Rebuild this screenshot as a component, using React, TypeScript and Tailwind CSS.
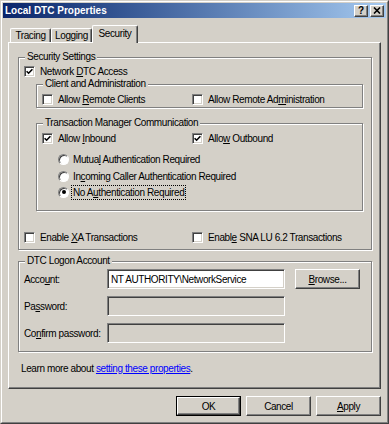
import type { ReactNode } from 'react';

const raised =
  'border border-white border-r-[#404040] border-b-[#404040] shadow-[inset_-1px_-1px_0_#808080,inset_1px_1px_0_#d4d0c8]';
const sunken =
  'border border-[#808080] border-r-white border-b-white shadow-[inset_1px_1px_0_#404040,inset_-1px_-1px_0_#d4d0c8]';

function U({ children }: { children: ReactNode }) {
  return <span className="underline underline-offset-[1px]">{children}</span>;
}

function Check({ checked }: { checked?: boolean }) {
  return (
    <span className={`w-[11px] h-[11px] shrink-0 bg-white flex items-center justify-center ${sunken}`}>
      {checked && (
        <svg width="7" height="7" viewBox="0 0 7 7">
          <path d="M0.6 3.2 L2.6 5.2 L6.4 1.2" fill="none" stroke="#000" strokeWidth="1.6" />
        </svg>
      )}
    </span>
  );
}

function Radio({ on }: { on?: boolean }) {
  return (
    <span className="w-[11px] h-[11px] shrink-0 rounded-full bg-white border border-[#808080] border-r-white border-b-white shadow-[inset_1px_1px_0_#404040] flex items-center justify-center">
      {on && <span className="w-[4px] h-[4px] rounded-full bg-black" />}
    </span>
  );
}

function Group({ title, className = '', children }: { title: string; className?: string; children: ReactNode }) {
  return (
    <fieldset className={`border border-[#808080] shadow-[inset_1px_1px_0_#fff,1px_1px_0_#fff] ${className}`}>
      <legend className="ml-[6px] px-[2px] leading-[12px] bg-[#d4d0c8]">{title}</legend>
      {children}
    </fieldset>
  );
}

function Btn({ children, isDefault }: { children: ReactNode; isDefault?: boolean }) {
  return (
    <div className={`w-[65px] h-[20px] ${isDefault ? 'border border-black' : ''}`}>
      <div className={`h-full flex items-center justify-center ${raised}`}>{children}</div>
    </div>
  );
}

export default function App() {
  return (
    <div className="w-[389px] h-[424px] bg-[#d4d0c8] text-black text-[10px] tracking-[-0.4px] font-['Liberation_Sans',Arial,sans-serif] border border-[#d4d0c8] border-r-[#404040] border-b-[#404040]">
      <div className="h-full flex flex-col border border-white border-r-[#808080] border-b-[#808080] p-px">
        {/* title bar */}
        <div className="h-[15px] flex items-center bg-linear-to-r from-[#0a246a] to-[#a6caf0] pl-[2px] pr-[2px]">
          <span className="text-white font-bold tracking-normal">Local DTC Properties</span>
          <div className="ml-auto flex gap-[2px]">
            <div className={`w-[14px] h-[12px] bg-[#d4d0c8] flex items-center justify-center font-bold text-[10px] tracking-normal leading-none ${raised}`}>
              ?
            </div>
            <div className={`w-[14px] h-[12px] bg-[#d4d0c8] flex items-center justify-center ${raised}`}>
              <svg width="8" height="7" viewBox="0 0 8 7">
                <path d="M1 0.5 L7 6.5 M7 0.5 L1 6.5" stroke="#000" strokeWidth="1.6" />
              </svg>
            </div>
          </div>
        </div>

        {/* tabs */}
        <div className="flex items-end h-[17px] mt-[7px] pl-[7px]">
          <div className="w-[41px] h-[14px] flex items-center justify-center border-t border-l border-white border-r border-r-[#404040] rounded-tl-[2px] rounded-tr-[2px] shadow-[inset_-1px_0_0_#808080]">
            Tracing
          </div>
          <div className="w-[41px] h-[14px] flex items-center justify-center border-t border-l border-white border-r border-r-[#404040] rounded-tl-[2px] rounded-tr-[2px] shadow-[inset_-1px_0_0_#808080]">
            Logging
          </div>
          <div className="relative z-10 -mb-px w-[46px] h-[18px] pb-[3px] bg-[#d4d0c8] flex items-center justify-center border-t border-l border-white border-r border-r-[#404040] rounded-tl-[2px] rounded-tr-[2px] shadow-[inset_-1px_0_0_#808080]">
            Security
          </div>
        </div>

        {/* tab panel */}
        <div className="mx-[5px] h-[347px] border border-white border-r-[#404040] border-b-[#404040] shadow-[inset_-1px_-1px_0_#808080] pt-[8px] pl-[9px] pr-[8px]">
          <Group title="Security Settings">
            <div className="pl-[5px] pr-[8px] pb-[5px]">
              <div className="h-[14px] mt-[1px] flex items-center">
                <Check checked />
                <span className="ml-[5px]">
                  Network <U>D</U>TC Access
                </span>
              </div>

              <div className="pl-[12px]">
                <Group title="Client and Administration">
                  <div className="pt-[2px] pb-[1px] pl-[5px] flex items-center h-[14px] box-content">
                    <div className="w-[150px] flex items-center">
                      <Check />
                      <span className="ml-[5px]">
                        Allow <U>R</U>emote Clients
                      </span>
                    </div>
                    <div className="flex items-center">
                      <Check />
                      <span className="ml-[5px]">
                        Allow Remote Ad<U>m</U>inistration
                      </span>
                    </div>
                  </div>
                </Group>

                <Group title="Transaction Manager Communication" className="mt-[9px]">
                  <div className="pt-[2px] pb-[10px] pl-[5px]">
                    <div className="flex items-center h-[14px]">
                      <div className="w-[150px] flex items-center">
                        <Check checked />
                        <span className="ml-[5px]">
                          Allow <U>I</U>nbound
                        </span>
                      </div>
                      <div className="flex items-center">
                        <Check checked />
                        <span className="ml-[5px]">
                          Allo<U>w</U> Outbound
                        </span>
                      </div>
                    </div>
                    <div className="pl-[16px] mt-[6px]">
                      <div className="flex items-center h-[16px]">
                        <Radio />
                        <span className="ml-[2px] border border-transparent px-px leading-[13px]">
                          Mutua<U>l</U> Authentication Required
                        </span>
                      </div>
                      <div className="flex items-center h-[16px] mt-px">
                        <Radio />
                        <span className="ml-[2px] border border-transparent px-px leading-[13px]">
                          In<U>c</U>oming Caller Authentication Required
                        </span>
                      </div>
                      <div className="flex items-center h-[16px]">
                        <Radio on />
                        <span className="ml-[2px] border border-dotted border-black px-px leading-[13px]">
                          No A<U>u</U>thentication Required
                        </span>
                      </div>
                    </div>
                  </div>
                </Group>
              </div>

              <div className="flex items-center h-[14px] mt-[19px]">
                <div className="w-[168px] flex items-center">
                  <Check />
                  <span className="ml-[5px]">
                    Enable <U>X</U>A Transactions
                  </span>
                </div>
                <div className="flex items-center">
                  <Check />
                  <span className="ml-[5px]">
                    Enabl<U>e</U> SNA LU 6.2 Transactions
                  </span>
                </div>
              </div>
            </div>
          </Group>

          <Group title="DTC Logon Account" className="mt-[5px]">
            <div className="pl-[5px] pt-[2px] pb-[8px]">
              <div className="flex items-center h-[20px]">
                <span className="w-[83px]">
                  Acco<U>u</U>nt:
                </span>
                <div className={`w-[178px] h-[20px] bg-white flex items-center pl-[3px] ${sunken}`}>
                  NT AUTHORITY\NetworkService
                </div>
                <div className="ml-[10px]">
                  <Btn>
                    <span>
                      <U>B</U>rowse...
                    </span>
                  </Btn>
                </div>
              </div>
              <div className="flex items-center h-[20px] mt-[7px]">
                <span className="w-[83px]">
                  Pa<U>s</U>sword:
                </span>
                <div className={`w-[178px] h-[20px] bg-[#d4d0c8] ${sunken}`} />
              </div>
              <div className="flex items-center h-[20px] mt-[7px]">
                <span className="w-[83px]">
                  Co<U>n</U>firm password:
                </span>
                <div className={`w-[178px] h-[20px] bg-[#d4d0c8] ${sunken}`} />
              </div>
            </div>
          </Group>

          <div className="mt-[11px] pl-[3px] leading-[12px]">
            Learn more about{' '}
            <span className="text-[#0000ff] underline underline-offset-[1px]">setting these properties</span>.
          </div>
        </div>

        {/* dialog buttons */}
        <div className="flex justify-end gap-[5px] mt-[7px] pr-[5px]">
          <Btn isDefault>OK</Btn>
          <Btn>Cancel</Btn>
          <Btn>
            <span>
              <U>A</U>pply
            </span>
          </Btn>
        </div>
      </div>
    </div>
  );
}
